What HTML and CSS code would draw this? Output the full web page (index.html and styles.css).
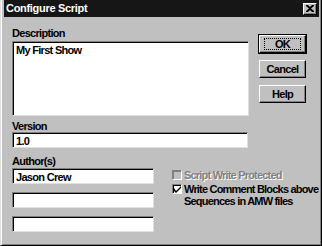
FILE: index.html
```html
<!DOCTYPE html>
<html lang="en">
<head>
    <meta charset="UTF-8">
    <title>Configure Script</title>
    <link rel="stylesheet" href="styles.css">
</head>
<body>
    <div class="window">
        <div class="titlebar">
            <span class="title">Configure Script</span>
            <div class="close">
                <svg width="8" height="7" viewBox="0 0 8 7">
                    <path d="M0 0h2l2 2 2-2h2v1L5 3.5 8 6v1H6L4 5 2 7H0V6l3-2.5L0 1z" fill="#000"/>
                </svg>
            </div>
        </div>
        <div class="content">
            <div class="top-row">
                <div class="field">
                    <div class="label">Description</div>
                    <div class="edit desc">My First Show</div>
                </div>
                <div class="buttons">
                    <div class="btn default"><span class="focus">OK</span></div>
                    <div class="btn">Cancel</div>
                    <div class="btn">Help</div>
                </div>
            </div>
            <div class="field version">
                <div class="label">Version</div>
                <div class="edit wide">1.0</div>
            </div>
            <div class="bottom-row">
                <div class="authors">
                    <div class="label">Author(s)</div>
                    <div class="edit">Jason Crew</div>
                    <div class="edit"></div>
                    <div class="edit"></div>
                </div>
                <div class="options">
                    <div class="check disabled">
                        <span class="box"></span>
                        <span class="text">Script Write Protected</span>
                    </div>
                    <div class="check">
                        <span class="box">
                            <svg width="7" height="7" viewBox="0 0 7 7">
                                <path d="M0 2v3l2 2 5-5V0L2 5z" fill="#000"/>
                            </svg>
                        </span>
                        <span class="text">Write Comment Blocks above<br>Sequences in AMW files</span>
                    </div>
                </div>
            </div>
        </div>
    </div>
</body>
</html>
```

FILE: styles.css
```css
body {
    margin: 0;
    width: 322px;
    height: 246px;
    overflow: hidden;
    font-family: 'Liberation Sans', Arial, sans-serif;
    font-weight: bold;
    font-size: 11px;
    letter-spacing: -0.7px;
    color: #000;
}

.window {
    box-sizing: border-box;
    height: 246px;
    background-color: #c0c0c0;
    border-left: 1px solid #dfdfdf;
    border-right: 1px solid #000;
    border-bottom: 1px solid #000;
    box-shadow: inset 1px 0 #fff, inset -1px -1px #808080;
    padding: 0 2px 0 2px;
    display: flex;
    flex-direction: column;
}

.titlebar {
    height: 17px;
    background-color: #161616;
    color: #fff;
    display: flex;
    align-items: center;
    justify-content: space-between;
    padding: 0 2px 0 2px;
    margin-left: 1px;
}

.title {
    line-height: 13px;
    letter-spacing: -0.3px;
}

.close {
    box-sizing: border-box;
    width: 14px;
    height: 12px;
    background-color: #c0c0c0;
    border-top: 1px solid #fff;
    border-left: 1px solid #fff;
    border-right: 1px solid #000;
    border-bottom: 1px solid #000;
    box-shadow: inset -1px -1px #808080;
    display: flex;
    align-items: center;
    justify-content: center;
}

.content {
    padding: 10px 0 0 9px;
}

.label {
    line-height: 12px;
    margin-bottom: 2px;
}

.edit {
    box-sizing: border-box;
    height: 16px;
    background-color: #fff;
    border-top: 1px solid #808080;
    border-left: 1px solid #808080;
    border-right: 1px solid #dfdfdf;
    border-bottom: 1px solid #dfdfdf;
    box-shadow: inset 1px 1px #000;
    padding: 2px 0 0 3px;
    line-height: 12px;
}

.top-row {
    display: flex;
}

.desc {
    width: 237px;
    height: 75px;
}

.buttons {
    display: flex;
    flex-direction: column;
    gap: 7px;
    margin-left: 10px;
    padding-top: 8px;
}

.btn {
    box-sizing: border-box;
    width: 47px;
    height: 18px;
    border-top: 1px solid #fff;
    border-left: 1px solid #fff;
    border-right: 1px solid #000;
    border-bottom: 1px solid #000;
    box-shadow: inset -1px -1px #808080;
    display: flex;
    align-items: center;
    justify-content: center;
    line-height: 12px;
}

.btn.default {
    outline: 1px solid #000;
}

.focus {
    box-sizing: border-box;
    width: 37px;
    height: 12px;
    border: 1px dotted #000;
    text-align: center;
    line-height: 10px;
}

.version {
    margin-top: 4px;
}

.version .label {
    margin-bottom: 0;
}

.wide {
    width: 236px;
}

.bottom-row {
    display: flex;
    margin-top: 7px;
}

.authors {
    width: 142px;
}

.authors .label {
    margin-bottom: 1px;
}

.authors .edit {
    margin-bottom: 8px;
}

.options {
    margin-left: 18px;
    padding-top: 14px;
    display: flex;
    flex-direction: column;
    gap: 2px;
}

.check {
    display: flex;
    align-items: flex-start;
}

.box {
    box-sizing: border-box;
    flex: none;
    width: 10px;
    height: 10px;
    margin-top: 1px;
    margin-right: 2px;
    background-color: #fff;
    border-top: 1px solid #808080;
    border-left: 1px solid #808080;
    border-right: 1px solid #fff;
    border-bottom: 1px solid #fff;
    box-shadow: inset 1px 1px #000;
    display: flex;
    align-items: center;
    justify-content: center;
}

.text {
    line-height: 12px;
    white-space: nowrap;
    letter-spacing: -0.8px;
}

.disabled .box {
    background-color: #c0c0c0;
    box-shadow: inset 1px 1px #808080;
}

.disabled .text {
    color: #808080;
    text-shadow: 1px 1px #fff;
}
```
